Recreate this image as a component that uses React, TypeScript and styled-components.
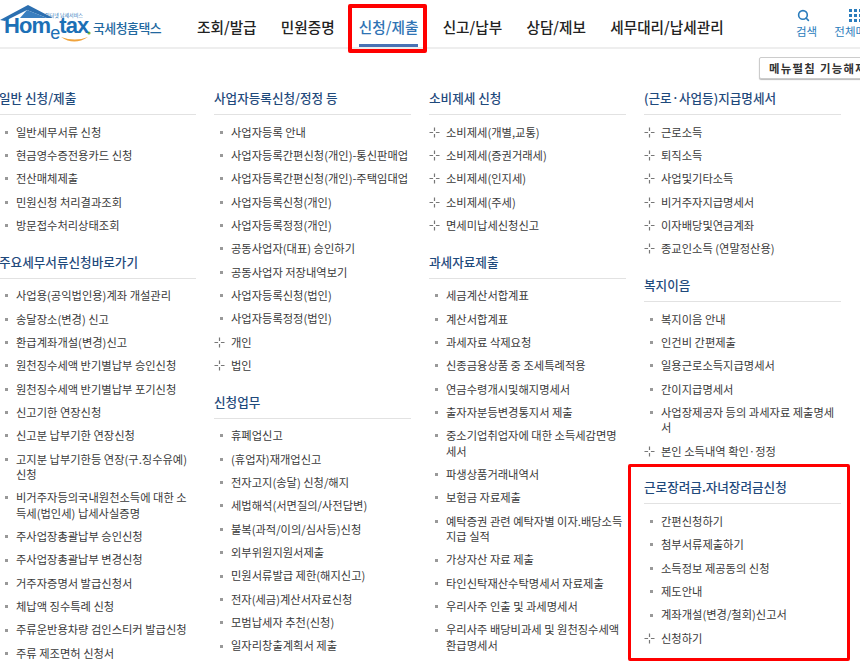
import React from "react";
import styled, { createGlobalStyle } from "styled-components";
import { Search } from "lucide-react";

const Global = createGlobalStyle`
  html, body { margin: 0; padding: 0; background: #fff; }
  body { width: 860px; height: 667px; overflow: hidden; font-family: "Noto Sans CJK KR", "Noto Sans", sans-serif; }
`;
const Page = styled.div`width: 860px; height: 667px; overflow: hidden; position: relative;`;
const Header = styled.header`display: flex; align-items: stretch; height: 47px; border-bottom: 2px solid #eee;`;
const LogoBox = styled.div`position: relative; width: 197px; flex: none; height: 47px;`;
const LogoArt = styled.svg`position: absolute; left: 0; top: 0;`;
const LogoTiny = styled.span`position: absolute; left: 45px; top: 12px; font-size: 5px; line-height: 6px; color: #2a76b8; white-space: nowrap;`;
const LogoWord = styled.span`position: absolute; left: 4px; top: 18px; font: bold 22px/16px "Liberation Sans", sans-serif; letter-spacing: -0.9px; color: #1c70b6; white-space: nowrap;`;
const LogoE = styled.span`position: relative; top: 6px; font-size: 18px; font-weight: normal;`;
const LogoName = styled.span`position: absolute; left: 93px; top: 18px; font-size: 12.9px; line-height: 20px; font-weight: 500; letter-spacing: -0.5px; color: #22689f; white-space: nowrap;`;
const Nav = styled.nav`display: flex; gap: 24.2px; flex: none; width: 585px;`;
const NavItem = styled.a<{ $active?: boolean }>`
  position: relative; font-size: 14.65px; line-height: 54px; height: 47px; font-weight: 500; white-space: nowrap;
  color: ${p => (p.$active ? "#2f73b4" : "#222")};
  ${p => p.$active && `&::after { content: ""; position: absolute; left: 0; right: 0; bottom: 0; height: 3px; background: #4a72b4; }`}
  ${p => p.$active && `&::before { content: ""; position: absolute; left: -11px; right: -9px; top: 4px; height: 49px; box-sizing: border-box; border: 4px solid #f00; border-radius: 2px; }`}
`;
const Tools = styled.div`display: flex; gap: 28px; flex: none; margin-left: 14px;`;
const Tool = styled.div`display: flex; flex-direction: column; align-items: center; width: 21px; color: #2a7cbc; font-size: 11.5px; line-height: 16px; white-space: nowrap; padding-top: 7px;`;
const ToolIcon = styled.div<{ $shift?: number }>`height: 16px; display: flex; align-items: center; justify-content: center; margin-right: ${p => p.$shift ?? 0}px;`;
const Toolbar = styled.div`height: 39px; padding: 8px 0 0 759px; box-sizing: border-box;`;
const FoldButton = styled.div`
  width: 130px; height: 22px; box-sizing: border-box; border: 1px solid #ccc; border-radius: 2px; background: #fff; box-shadow: 0 1px 1px #bbb;
  font-size: 11.4px; line-height: 20px; font-weight: 700; color: #333; padding-left: 9px; white-space: nowrap; letter-spacing: 1.3px;
`;
const Columns = styled.div`display: grid; grid-template-columns: repeat(4, 197px); gap: 18px; margin-left: -1px; align-items: start;`;
const Column = styled.div`display: flex; flex-direction: column; gap: 14.5px;`;
const Section = styled.section<{ $flagged?: boolean }>`
  position: relative;
  ${p => p.$flagged && `&::after { content: ""; position: absolute; left: -16px; right: -9px; top: -13px; bottom: -11px; box-sizing: border-box; border: 3px solid #f00; border-radius: 2px; pointer-events: none; }`}
`;
const Heading = styled.h3`
  margin: 0; height: 27px; box-sizing: border-box; border-bottom: 1px solid #e2e2e2; font-size: 12.6px; line-height: 20px; font-weight: 500; color: #1f4a7c; white-space: nowrap;
`;
const List = styled.ul`list-style: none; margin: 5.5px 0 0; padding: 0;`;
const Row = styled.li`display: flex; padding: 4px 0; font-size: 11.25px; line-height: 15.35px; color: #3a3a3a;`;
const Marker = styled.span`flex: none; width: 17px; height: 15.35px; display: flex; align-items: center; justify-content: flex-start;`;
const Dot = styled.i`display: block; width: 3px; height: 3px; margin-left: 6px; background: #999;`;
const Text = styled.span`min-width: 0;`;

type Item = string | { t: string; plus: true };
const p = (t: string): Item => ({ t, plus: true });
type Sec = { title: string; items: Item[]; flagged?: boolean };

const columns: Sec[][] = [
  [
    { title: "일반 신청/제출", items: ["일반세무서류 신청", "현금영수증전용카드 신청", "전산매체제출", "민원신청 처리결과조회", "방문접수처리상태조회"] },
    { title: "주요세무서류신청바로가기", items: ["사업용(공익법인용)계좌 개설관리", "송달장소(변경) 신고", "환급계좌개설(변경)신고", "원천징수세액 반기별납부 승인신청", "원천징수세액 반기별납부 포기신청", "신고기한 연장신청", "신고분 납부기한 연장신청", "고지분 납부기한등 연장(구.징수유예) 신청", "비거주자등의국내원천소득에 대한 소득세(법인세) 납세사실증명", "주사업장총괄납부 승인신청", "주사업장총괄납부 변경신청", "거주자증명서 발급신청서", "체납액 징수특례 신청", "주류운반용차량 검인스티커 발급신청", "주류 제조면허 신청서"] },
  ],
  [
    { title: "사업자등록신청/정정 등", items: ["사업자등록 안내", "사업자등록간편신청(개인)-통신판매업", "사업자등록간편신청(개인)-주택임대업", "사업자등록신청(개인)", "사업자등록정정(개인)", "공동사업자(대표) 승인하기", "공동사업자 저장내역보기", "사업자등록신청(법인)", "사업자등록정정(법인)", p("개인"), p("법인")] },
    { title: "신청업무", items: ["휴폐업신고", "(휴업자)재개업신고", "전자고지(송달) 신청/해지", "세법해석(서면질의/사전답변)", "불복(과적/이의/심사등)신청", "외부위원지원서제출", "민원서류발급 제한(해지신고)", "전자(세금)계산서자료신청", "모범납세자 추천(신청)", "일자리창출계획서 제출"] },
  ],
  [
    { title: "소비제세 신청", items: [p("소비제세(개별,교통)"), p("소비제세(증권거래세)"), p("소비제세(인지세)"), p("소비제세(주세)"), p("면세미납세신청신고")] },
    { title: "과세자료제출", items: ["세금계산서합계표", "계산서합계표", "과세자료 삭제요청", "신종금융상품 중 조세특례적용", "연금수령개시및해지명세서", "출자자분등변경통지서 제출", "중소기업취업자에 대한 소득세감면명세서", "파생상품거래내역서", "보험금 자료제출", "예탁증권 관련 예탁자별 이자.배당소득 지급 실적", "가상자산 자료 제출", "타인신탁재산수탁명세서 자료제출", "우리사주 인출 및 과세명세서", "우리사주 배당비과세 및 원천징수세액 환급명세서"] },
  ],
  [
    { title: "(근로·사업등)지급명세서", items: [p("근로소득"), p("퇴직소득"), p("사업및기타소득"), p("비거주자지급명세서"), p("이자배당및연금계좌"), p("종교인소득 (연말정산용)")] },
    { title: "복지이음", items: ["복지이음 안내", "인건비 간편제출", "일용근로소득지급명세서", "간이지급명세서", "사업장제공자 등의 과세자료 제출명세서", p("본인 소득내역 확인·정정")] },
    { title: "근로장려금.자녀장려금신청", flagged: true, items: ["간편신청하기", "첨부서류제출하기", "소득정보 제공동의 신청", "제도안내", "계좌개설(변경/철회)신고서", p("신청하기")] },
  ],
];

const PlusIcon = () => (
  <svg width="11" height="11" viewBox="0 0 11 11">
    <path d="M5.5 0.5v3.6M5.5 6.9v3.6M0.5 5.5h3.6M6.9 5.5h3.6" stroke="#777" strokeWidth="1.2" fill="none" />
  </svg>
);
const GridIcon = () => (
  <svg width="13" height="13" viewBox="0 0 13 13" fill="#2a7cbc">
    {[0, 5, 10].flatMap(y => [0, 5, 10].map(x => <rect key={`${x}-${y}`} x={x} y={y} width="3" height="3" />))}
  </svg>
);

export default function App() {
  return (
    <Page>
      <Global />
      <Header>
        <LogoBox>
          <LogoArt width="100" height="46" viewBox="0 0 100 46">
            <path d="M0 20 L28 5 L53 18 L47 18 L27 10 L5 21 Z" fill="#2c6fb0" />
            <path d="M27 10 L47 18 L20 18 Z" fill="#3a7fc0" />
            <path d="M61 37 Q74 46 88 37 Q75 42 61 37 Z" fill="#f0a33c" />
            <circle cx="89" cy="33" r="1.6" fill="#7fb53a" />
          </LogoArt>
          <LogoTiny>인터넷 납세서비스</LogoTiny>
          <LogoWord>Hom<LogoE>e</LogoE>tax</LogoWord>
          <LogoName>국세청홈택스</LogoName>
        </LogoBox>
        <Nav>
          <NavItem>조회/발급</NavItem>
          <NavItem>민원증명</NavItem>
          <NavItem $active>신청/제출</NavItem>
          <NavItem>신고/납부</NavItem>
          <NavItem>상담/제보</NavItem>
          <NavItem>세무대리/납세관리</NavItem>
        </Nav>
        <Tools>
          <Tool><ToolIcon $shift={7}><Search size={13} strokeWidth={3} /></ToolIcon>검색</Tool>
          <Tool><ToolIcon><GridIcon /></ToolIcon>전체메뉴</Tool>
        </Tools>
      </Header>
      <Toolbar><FoldButton>메뉴펼침 기능해제</FoldButton></Toolbar>
      <Columns>
        {columns.map((col, i) => (
          <Column key={i}>
            {col.map(sec => (
              <Section key={sec.title} $flagged={sec.flagged}>
                <Heading>{sec.title}</Heading>
                <List>
                  {sec.items.map(it => {
                    const plus = typeof it !== "string";
                    return (
                      <Row key={plus ? it.t : it}>
                        <Marker>{plus ? <PlusIcon /> : <Dot />}</Marker>
                        <Text>{plus ? it.t : it}</Text>
                      </Row>
                    );
                  })}
                </List>
              </Section>
            ))}
          </Column>
        ))}
      </Columns>
    </Page>
  );
}
